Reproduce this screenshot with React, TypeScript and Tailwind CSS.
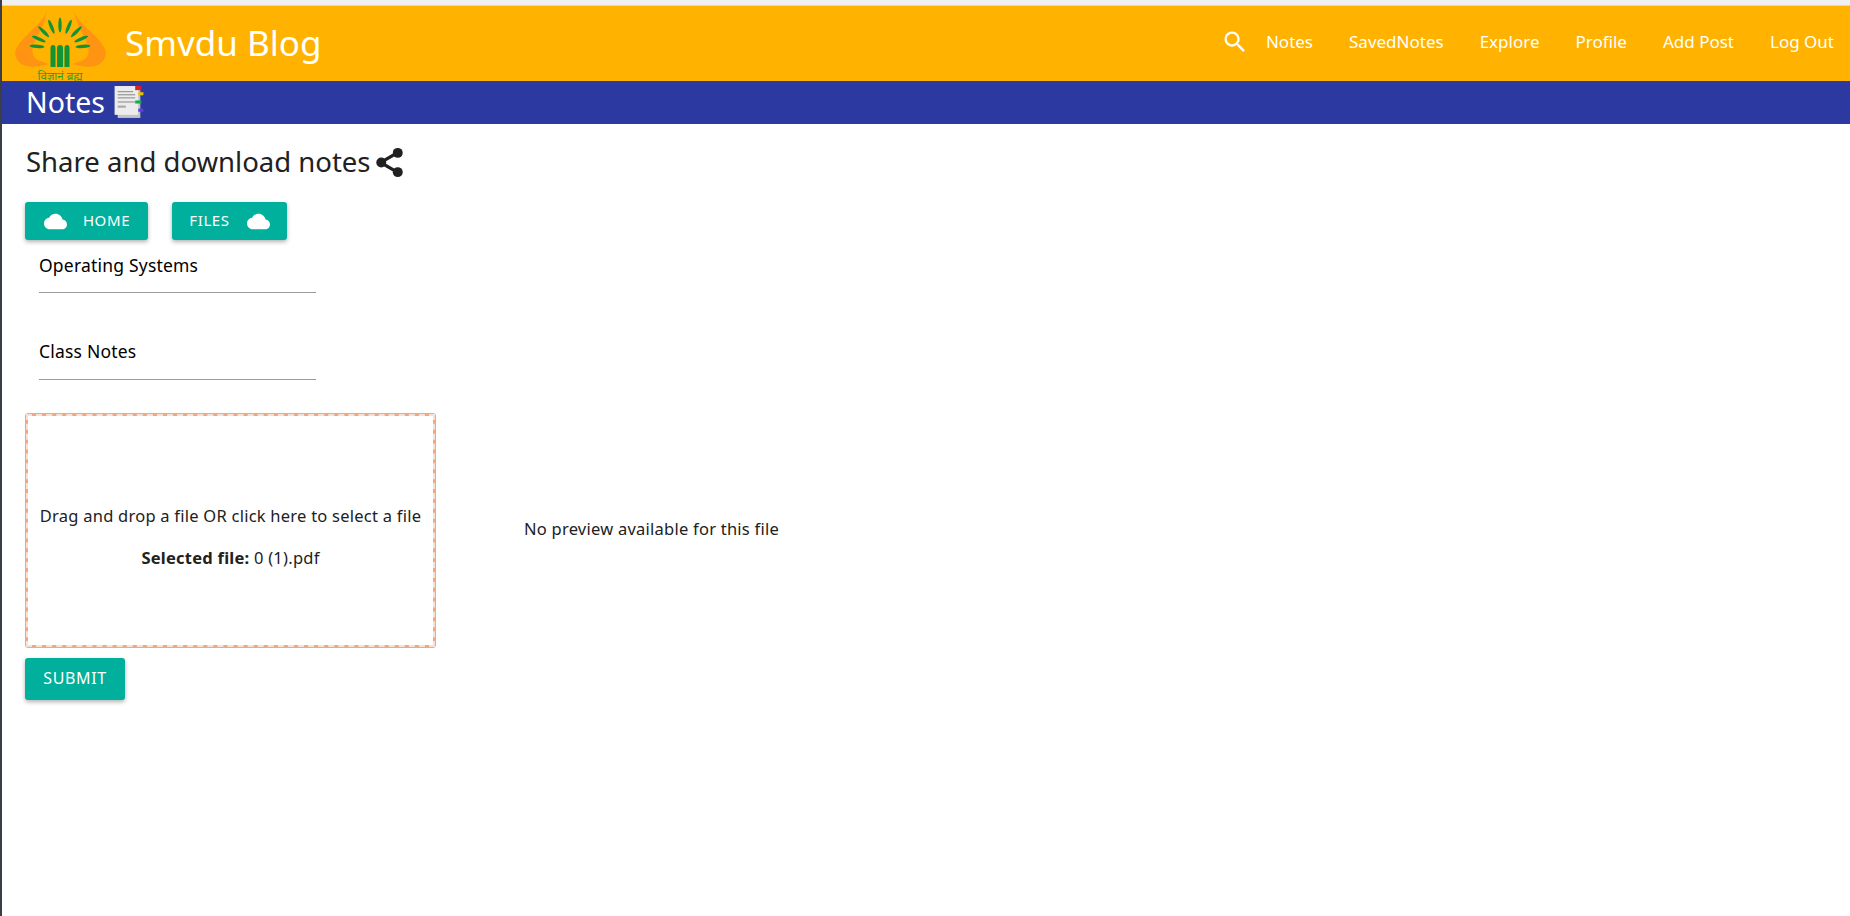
import React from "react";

const lobe = "M62 4 C64 14 76 22 84 31 C94 41 98 50 88 58 C80 63 68 60 60 58 C66 56 73 55 76 49 C78 42 74 34 70 27 C66 20 63 12 62 4Z";

function Logo() {
  const angles = [0, -22, 22, -45, 45, -67, 67, -86, 86];
  return (
    <svg width="96" height="75" viewBox="0 0 96 75" className="block shrink-0">
      <path d={lobe} fill="#ff9412" />
      <path transform="translate(97 0) scale(-1 1)" d={lobe} fill="#ff9412" />
      <path d="M30 28 Q40 24 43 30 M66 28 Q56 24 53 30" stroke="#ffa328" strokeWidth="1" fill="none" />
      <g fill="#0f9535">
        {angles.map((a) => (
          <ellipse key={a} cx="48" cy="19" rx="1.7" ry="7.5" transform={`rotate(${a} 48 42)`} />
        ))}
        <path d="M38.5 61 V42 Q38.5 39 41 39 Q43.5 39 43.5 42 V61Z" />
        <path d="M45 61 V42 Q45 39 48 39 Q51 39 51 42 V61Z" />
        <path d="M52.5 61 V42 Q52.5 39 55 39 Q57.5 39 57.5 42 V61Z" />
      </g>
      <text x="48" y="73.5" textAnchor="middle" fontSize="11.5" fill="#3d9a28" fontFamily="'Noto Sans','DejaVu Sans',sans-serif">विज्ञानं ब्रह्म</text>
    </svg>
  );
}

function NotesIcon() {
  return (
    <svg width="34" height="35" viewBox="0 0 32 34" className="block">
      <rect x="5" y="3" width="22" height="29" fill="#c4c4c4" />
      <rect x="2" y="1" width="23" height="28" fill="#ececec" />
      <rect x="22" y="1" width="6" height="4" fill="#e02020" />
      <rect x="25" y="7" width="5" height="3" fill="#eac300" />
      <rect x="22" y="15" width="6" height="3" fill="#10b050" />
      <rect x="25" y="23" width="5" height="3" fill="#6040e0" />
      <g fill="#8a8a8a">
        <rect x="5" y="6" width="15" height="1" />
        <rect x="5" y="9" width="17" height="1" />
        <rect x="5" y="12" width="17" height="1" />
        <rect x="5" y="16" width="17" height="1" />
        <rect x="5" y="20" width="8" height="2" fill="#a8a8a8" />
      </g>
    </svg>
  );
}

function Cloud() {
  return (
    <svg width="23" height="23" viewBox="0 0 24 24" fill="#fff" className="block shrink-0">
      <path d="M19.35 10.04C18.67 6.59 15.64 4 12 4 9.11 4 6.6 5.64 5.35 8.04 2.34 8.36 0 10.91 0 14c0 3.31 2.69 6 6 6h13c2.76 0 5-2.24 5-5 0-2.64-2.05-4.78-4.65-4.96z" />
    </svg>
  );
}

const links = ["Notes", "SavedNotes", "Explore", "Profile", "Add Post", "Log Out"];

export default function App() {
  return (
    <div className="min-h-[916px] bg-white border-l-2 border-[#3a3f47] font-['Noto_Sans','Open_Sans',sans-serif] text-[#212121]">
      <div className="h-[6px] bg-[#f0f0f0] border-b border-[#dcd8cc]" />
      <header className="h-[75px] bg-[#ffb300] flex items-center pl-[10px] pr-[16px] text-white">
        <Logo />
        <span className="ml-[17px] text-[35px] leading-none mt-[-3px]">Smvdu Blog</span>
        <div className="ml-auto flex items-center gap-[36px]">
          <svg width="28" height="28" viewBox="0 0 24 24" fill="#fff" className="mt-[-4px] mr-[-19px]">
            <path d="M15.5 14h-.79l-.28-.27C15.41 12.59 16 11.11 16 9.5 16 5.91 13.09 3 9.5 3S3 5.91 3 9.5 5.91 16 9.5 16c1.61 0 3.09-.59 4.23-1.57l.27.28v.79l5 4.99L20.49 19l-4.99-5zm-6 0C7.01 14 5 11.99 5 9.5S7.01 5 9.5 5 14 7.01 14 9.5 11.99 14 9.5 14z" />
          </svg>
          {links.map((t) => (
            <span key={t} className="text-[17px] leading-6 mt-[-4px]">{t}</span>
          ))}
        </div>
      </header>
      <div className="h-[43px] bg-[#2b39a0] flex items-center pl-[24px] text-white">
        <span className="text-[28.5px] leading-none">Notes</span>
        <span className="ml-[7px]"><NotesIcon /></span>
      </div>
      <main className="pl-[23px] pt-[20px]">
        <div className="flex items-center h-[36px] pl-[1px]">
          <span className="text-[27.5px] leading-none">Share and download notes</span>
          <svg width="33" height="33" viewBox="0 0 24 24" fill="#212121" className="ml-[2px]">
            <circle cx="18" cy="5" r="3.6" />
            <circle cx="6" cy="12" r="3.6" />
            <circle cx="18" cy="19" r="3.6" />
            <path d="M6 10.4 17 4l1.2 2L7 12.5zM7 11.4 18.2 18 17 20 6 13.6z" />
          </svg>
        </div>
        <div className="flex gap-[24px] mt-[22px]">
          <button className="h-[38px] w-[123px] bg-[#00af9c] rounded-[3px] shadow-[0_2px_4px_rgba(0,0,0,0.3)] text-white flex items-center justify-center gap-[16px] text-[15px] tracking-[0.6px] pl-[1px]">
            <Cloud /> <span className="mt-[-2px]">HOME</span>
          </button>
          <button className="h-[38px] w-[115px] bg-[#00af9c] rounded-[3px] shadow-[0_2px_4px_rgba(0,0,0,0.3)] text-white flex items-center justify-center gap-[17px] text-[15px] tracking-[0.6px]">
            <span className="mt-[-2px]">FILES</span> <Cloud />
          </button>
        </div>
        <div className="ml-[14px] mt-[13px] w-[277px] h-[40px] border-b border-[#9a9a9a] text-black text-[17.5px] tracking-[0.2px] leading-6 whitespace-nowrap">Operating Systems</div>
        <div className="ml-[14px] mt-[46px] w-[277px] h-[41px] border-b border-[#9a9a9a] text-black text-[17.5px] tracking-[0.2px] leading-6 whitespace-nowrap">Class Notes</div>
        <div className="flex items-center mt-[33px]">
          <div className="w-[411px] h-[235px] border border-[#f5a77c] bg-[#f5a77c] rounded-[3px] text-[16.5px] tracking-[0.24px] leading-[22px] text-[#212121]">
            <div className="w-full h-full bg-white bg-clip-padding border-2 border-dashed border-[#f3e2d8] flex flex-col items-center justify-center pt-[12px]">
              <p className="whitespace-nowrap">Drag and drop a file OR click here to select a file</p>
              <p className="mt-[20px]"><b className="font-bold">Selected file:</b> 0 (1).pdf</p>
            </div>
          </div>
          <p className="ml-[88px] mt-[-4px] text-[16.5px] tracking-[0.24px] leading-[22px]">No preview available for this file</p>
        </div>
        <button className="mt-[10px] block w-[100px] h-[42px] bg-[#00af9c] rounded-[3px] shadow-[0_2px_4px_rgba(0,0,0,0.3)] text-white text-[16px] tracking-[0.6px] pb-[2px]">SUBMIT</button>
      </main>
    </div>
  );
}
